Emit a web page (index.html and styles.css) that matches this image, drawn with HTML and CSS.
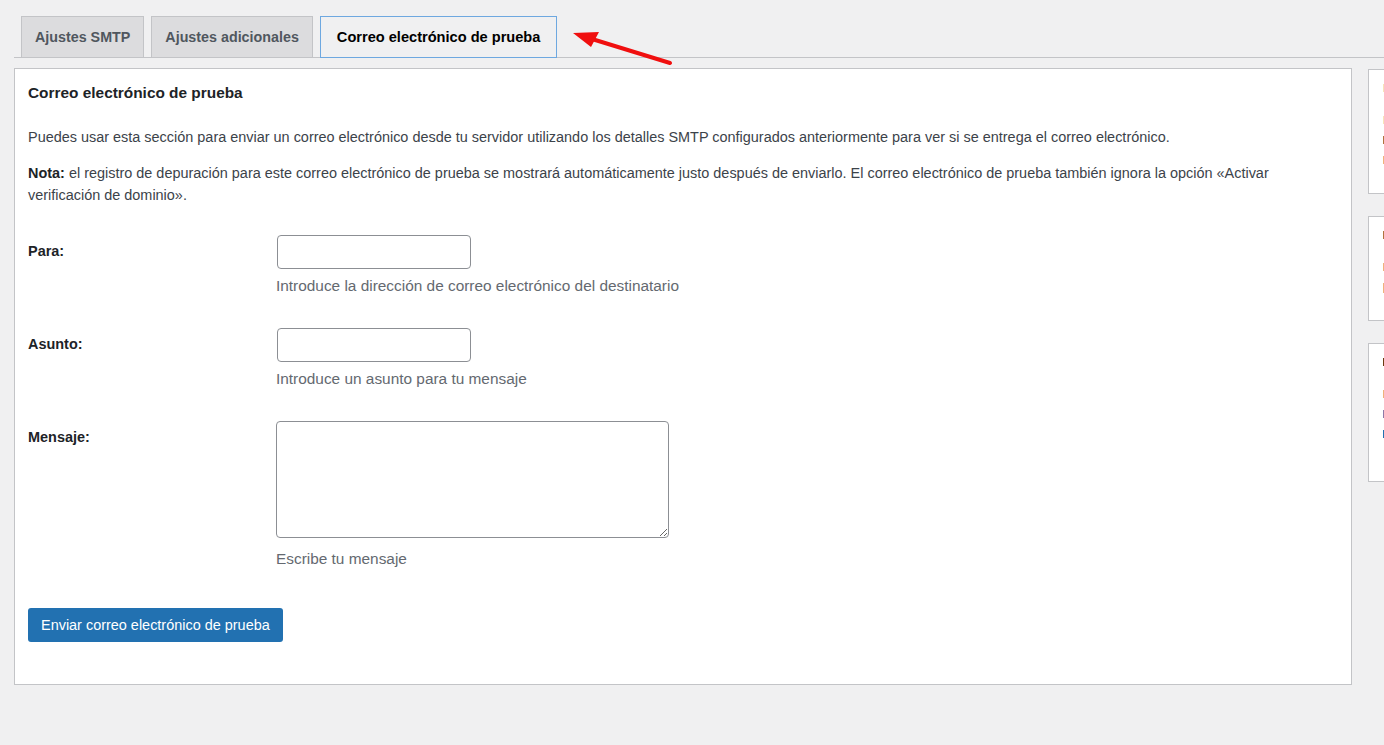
FILE: index.html
```html
<!DOCTYPE html>
<html lang="es">
<head>
    <meta charset="UTF-8">
    <meta name="viewport" content="width=device-width, initial-scale=1.0">
    <title>Correo electrónico de prueba</title>
    <link rel="stylesheet" href="styles.css">
</head>
<body>
    <div class="wrap">
        <nav class="nav-tab-wrapper">
            <a href="#" class="nav-tab">Ajustes SMTP</a>
            <a href="#" class="nav-tab">Ajustes adicionales</a>
            <a href="#" class="nav-tab nav-tab-active">Correo electrónico de prueba</a>
        </nav>

        <div class="columns">
            <div class="postbox">
                <h3 class="postbox-title">Correo electrónico de prueba</h3>
                <p>Puedes usar esta sección para enviar un correo electrónico desde tu servidor utilizando los detalles SMTP configurados anteriormente para ver si se entrega el correo electrónico.</p>
                <p><strong>Nota:</strong> el registro de depuración para este correo electrónico de prueba se mostrará automáticamente justo después de enviarlo. El correo electrónico de prueba también ignora la opción «Activar verificación de dominio».</p>

                <form class="test-form">
                    <div class="form-row">
                        <label for="to">Para:</label>
                        <div class="field">
                            <input type="text" id="to" name="to">
                            <p class="description">Introduce la dirección de correo electrónico del destinatario</p>
                        </div>
                    </div>
                    <div class="form-row">
                        <label for="subject">Asunto:</label>
                        <div class="field">
                            <input type="text" id="subject" name="subject">
                            <p class="description">Introduce un asunto para tu mensaje</p>
                        </div>
                    </div>
                    <div class="form-row">
                        <label for="message">Mensaje:</label>
                        <div class="field">
                            <textarea id="message" name="message"></textarea>
                            <p class="description">Escribe tu mensaje</p>
                        </div>
                    </div>
                    <button type="submit" class="button-primary">Enviar correo electrónico de prueba</button>
                </form>
            </div>

            <aside class="sidebar">
                <div class="side-box box-one">
                    <span class="mark pale"></span>
                    <span class="mark pale gap-lg"></span>
                    <span class="mark brown"></span>
                    <span class="mark orange"></span>
                </div>
                <div class="side-box box-two">
                    <span class="mark brown"></span>
                    <span class="mark orange gap-lg"></span>
                    <span class="mark orange tall"></span>
                </div>
                <div class="side-box box-three">
                    <span class="mark dark"></span>
                    <span class="mark orange gap-lg"></span>
                    <span class="mark purple"></span>
                    <span class="mark blue"></span>
                </div>
            </aside>
        </div>

        <svg class="arrow" width="120" height="55" viewBox="0 0 120 55">
            <line x1="32" y1="19" x2="110" y2="43" stroke="#f00f0f" stroke-width="4" stroke-linecap="round"/>
            <polygon points="13,13 39,12 31,27" fill="#f00f0f"/>
        </svg>
    </div>
</body>
</html>
```

FILE: styles.css
```css
html, body {
    overflow: hidden;
}

body {
    margin: 0;
    background-color: #f0f0f1;
    color: #3c434a;
    font-family: "Liberation Sans", Arial, sans-serif;
    font-size: 14.45px;
}

.wrap {
    position: relative;
    padding: 16px 0 0 14px;
}

.nav-tab-wrapper {
    display: flex;
    padding-left: 7px;
    border-bottom: 1px solid #c3c4c7;
    height: 41px;
}

.nav-tab {
    box-sizing: border-box;
    height: 42px;
    margin-right: 7px;
    padding: 0 13px;
    display: flex;
    align-items: center;
    border: 1px solid #c3c4c7;
    background-color: #dcdcde;
    color: #50575e;
    font-size: 14.3px;
    font-weight: 600;
    text-decoration: none;
}

.nav-tab-active {
    padding: 0 16px;
    background-color: #f0f0f1;
    border-color: #6ea8e0;
    color: #000;
    font-size: 14.6px;
}

.columns {
    display: flex;
    gap: 16px;
    margin-top: 10px;
}

.postbox {
    box-sizing: border-box;
    width: 1338px;
    flex-shrink: 0;
    padding: 13px 13px 42px;
    background-color: #fff;
    border: 1px solid #c3c4c7;
}

.postbox-title {
    margin: 0 0 22px;
    color: #1d2327;
    font-size: 15.4px;
    font-weight: 600;
    line-height: 22px;
}

.postbox p {
    margin: 0 0 14px;
    line-height: 22px;
}

.postbox strong {
    color: #1d2327;
}

.test-form {
    margin-top: 29px;
}

.form-row {
    display: grid;
    grid-template-columns: 248px 1fr;
    margin-bottom: 31px;
}

.form-row label {
    padding-top: 5px;
    line-height: 22px;
    color: #1d2327;
    font-weight: 600;
}

.field input,
.field textarea {
    display: block;
    box-sizing: border-box;
    margin: 0;
    padding: 0 8px;
    border: 1px solid #8c8f94;
    border-radius: 4px;
    background-color: #fff;
    font-family: inherit;
    font-size: 14.3px;
}

.field input {
    width: 194px;
    height: 34px;
    margin-left: 1px;
}

.field textarea {
    width: 393px;
    height: 117px;
    padding: 6px 8px;
}

.postbox .description {
    margin: 6px 0 0;
    color: #646970;
    font-size: 15.4px;
    line-height: 22px;
}

.postbox textarea + .description {
    margin-top: 10px;
}

.form-row:last-of-type {
    margin-bottom: 38px;
}

.button-primary {
    height: 34px;
    padding: 0 13px;
    border: none;
    border-radius: 3px;
    background-color: #2271b1;
    color: #fff;
    font-family: inherit;
    font-size: 14.45px;
    cursor: pointer;
}

.sidebar {
    display: flex;
    flex-direction: column;
    gap: 22px;
    flex: 1 1 auto;
    min-width: 0;
    overflow: hidden;
    padding-top: 1px;
}

.side-box {
    box-sizing: border-box;
    width: 280px;
    background-color: #fff;
    border: 1px solid #c3c4c7;
    padding: 14px 0 0 14px;
}

.box-one {
    height: 125px;
}

.box-two {
    height: 105px;
}

.box-three {
    height: 139px;
}

.mark {
    display: block;
    width: 2px;
    height: 8px;
    margin-bottom: 12px;
}

.mark.gap-lg {
    margin-top: 24px;
}

.mark.tall {
    height: 10px;
}

.pale {
    background-color: #f7e4b8;
}

.brown {
    background-color: #b0733e;
}

.orange {
    background-color: #efb27a;
}

.dark {
    background-color: #6b3a10;
}

.purple {
    background-color: #8d7aa8;
}

.blue {
    background-color: #2271b1;
}

.arrow {
    position: absolute;
    left: 560px;
    top: 20px;
}
```
